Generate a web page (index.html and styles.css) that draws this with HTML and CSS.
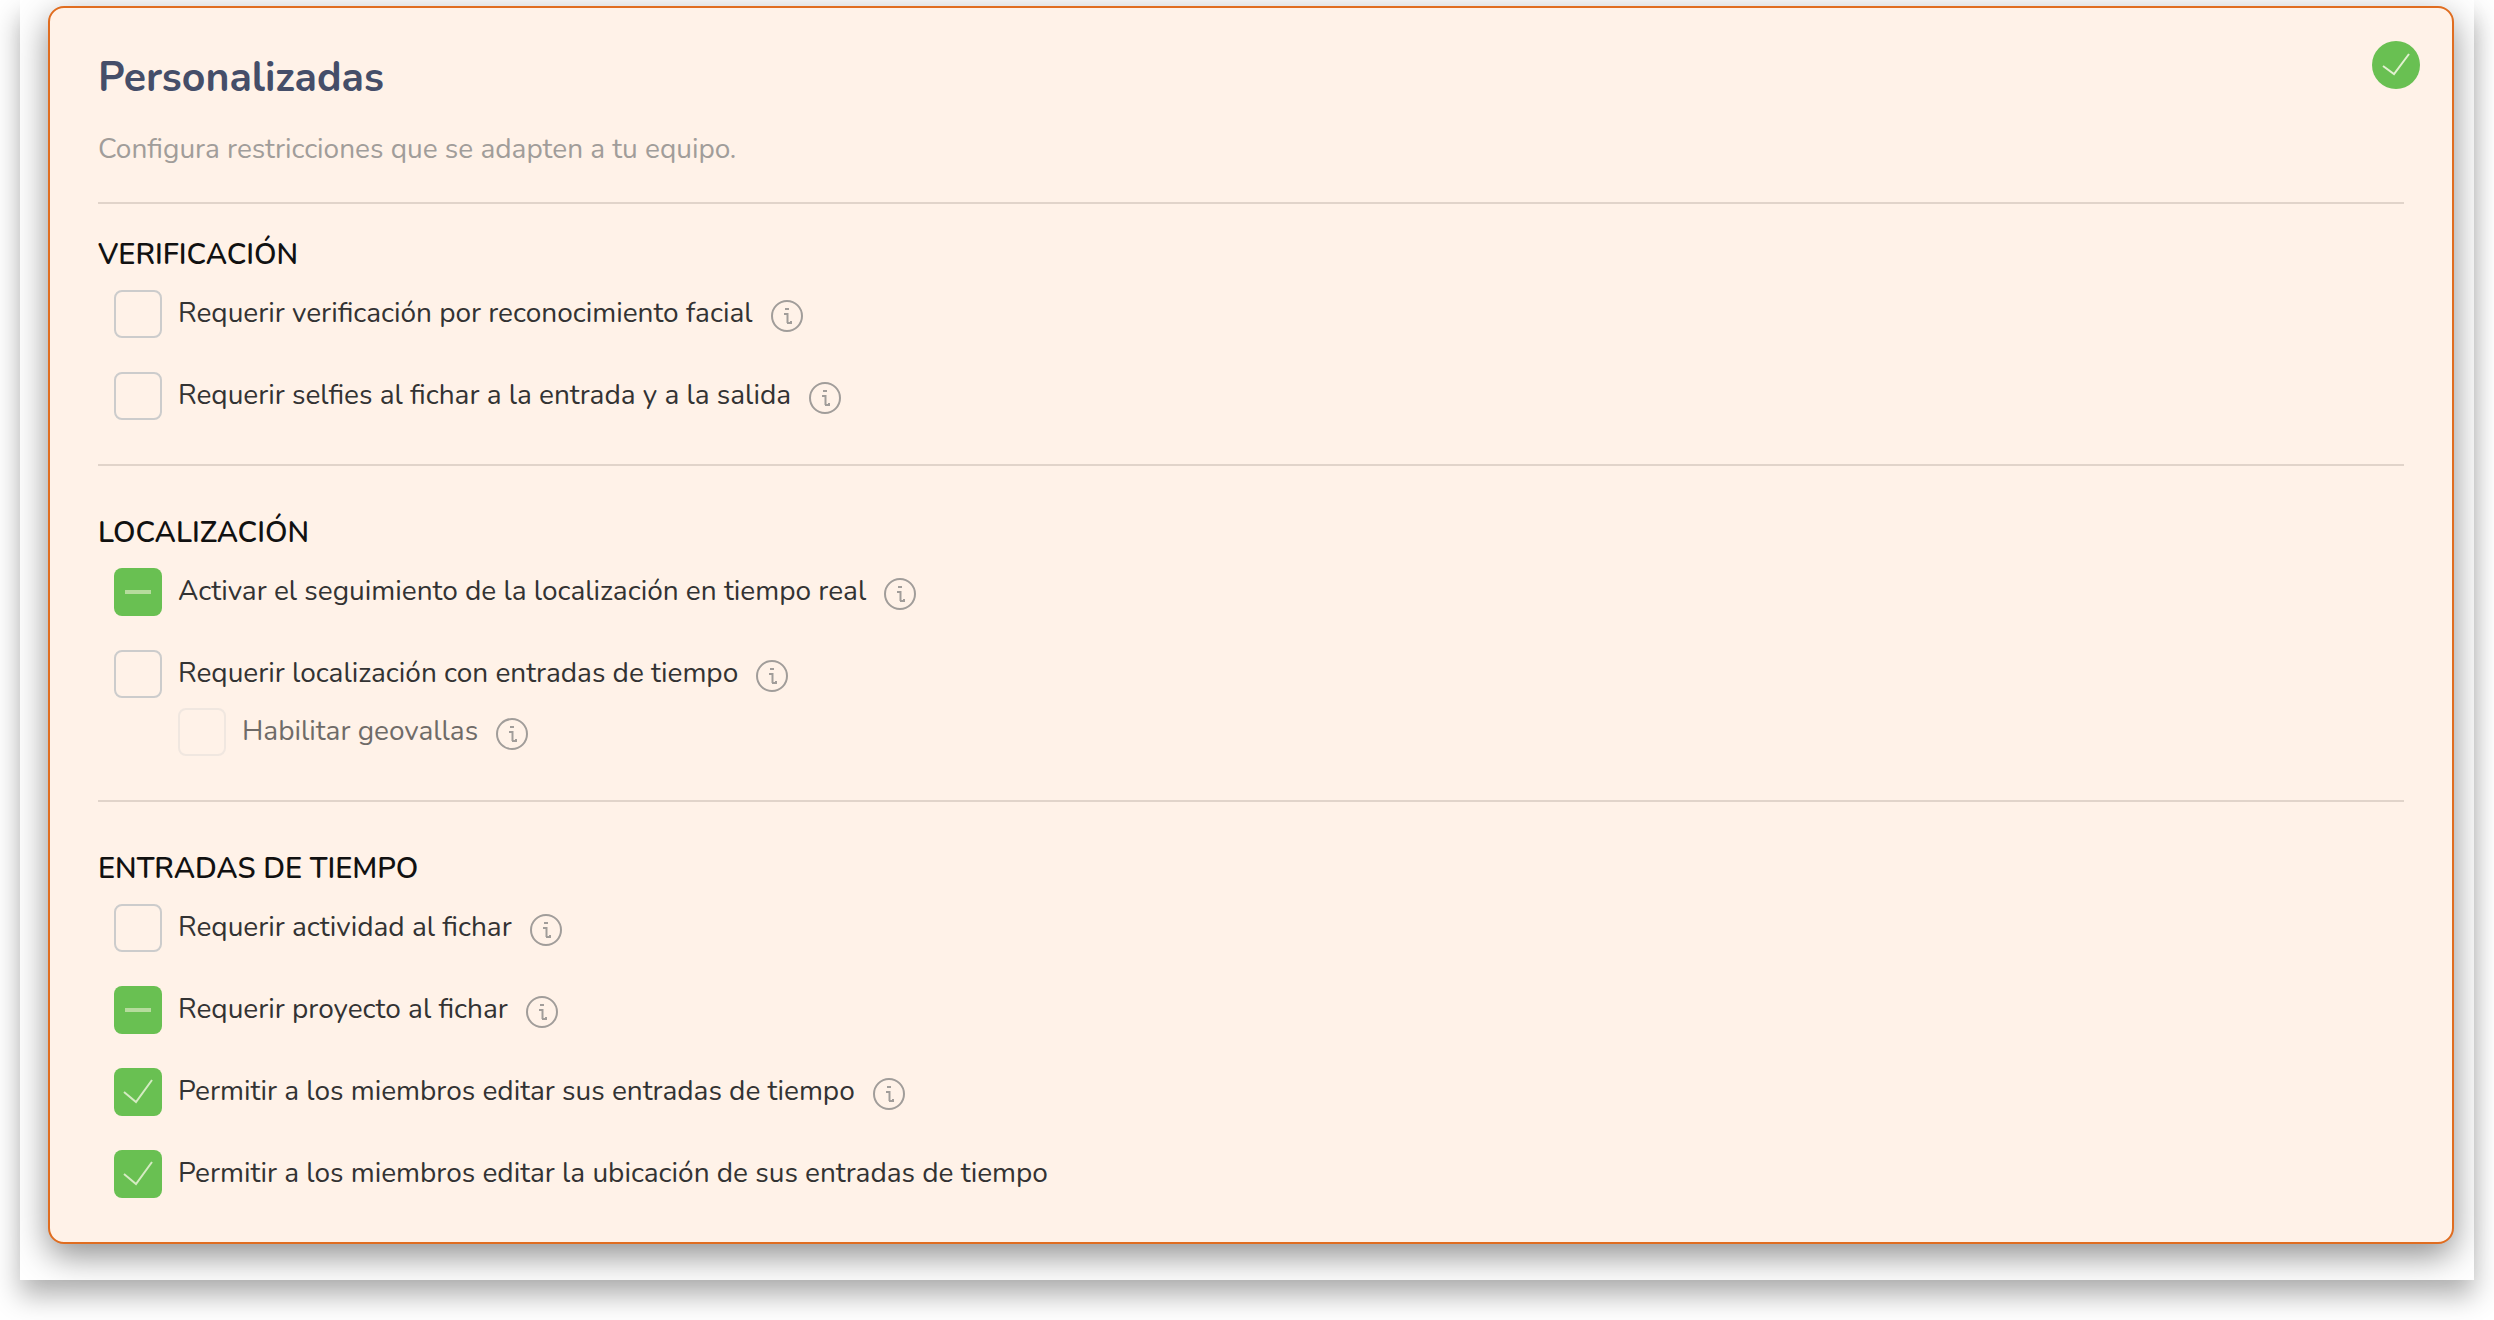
FILE: index.html
```html
<!DOCTYPE html>
<html lang="es">
<head>
    <meta charset="UTF-8">
    <meta name="viewport" content="width=device-width, initial-scale=1.0">
    <title>Restricciones personalizadas</title>
    <link rel="stylesheet" href="styles.css">
</head>
<body>
    <svg class="sprite" aria-hidden="true">
        <symbol id="icon-info" viewBox="0 0 32 32">
            <circle cx="16" cy="16" r="15"/>
            <path d="M14 9h4M13 14h3.5v9M16 23h4v-2"/>
        </symbol>
    </svg>

    <main class="panel">
        <div class="card">
            <svg class="selected-badge" viewBox="0 0 48 48" role="img" aria-label="Seleccionado">
                <circle cx="24" cy="24" r="24"/>
                <path d="M11 25l11 8 15-20"/>
            </svg>

            <header class="card-header">
                <h1 class="card-title">Personalizadas</h1>
                <p class="card-subtitle">Configura restricciones que se adapten a tu equipo.</p>
            </header>

            <section class="section">
                <h2 class="section-title">VERIFICACIÓN</h2>
                <div class="options">
                    <div class="option">
                        <input type="checkbox" class="checkbox" id="facial">
                        <label for="facial">Requerir verificación por reconocimiento facial</label>
                        <button type="button" class="info" aria-label="Información"><svg><use href="#icon-info"/></svg></button>
                    </div>
                    <div class="option">
                        <input type="checkbox" class="checkbox" id="selfies">
                        <label for="selfies">Requerir selfies al fichar a la entrada y a la salida</label>
                        <button type="button" class="info" aria-label="Información"><svg><use href="#icon-info"/></svg></button>
                    </div>
                </div>
            </section>

            <section class="section">
                <h2 class="section-title">LOCALIZACIÓN</h2>
                <div class="options">
                    <div class="option">
                        <input type="checkbox" class="checkbox partial" id="seguimiento" checked>
                        <label for="seguimiento">Activar el seguimiento de la localización en tiempo real</label>
                        <button type="button" class="info" aria-label="Información"><svg><use href="#icon-info"/></svg></button>
                    </div>
                    <div class="option-group">
                        <div class="option">
                            <input type="checkbox" class="checkbox" id="localizacion">
                            <label for="localizacion">Requerir localización con entradas de tiempo</label>
                            <button type="button" class="info" aria-label="Información"><svg><use href="#icon-info"/></svg></button>
                        </div>
                        <div class="option nested">
                            <input type="checkbox" class="checkbox" id="geovallas" disabled>
                            <label for="geovallas">Habilitar geovallas</label>
                            <button type="button" class="info" aria-label="Información"><svg><use href="#icon-info"/></svg></button>
                        </div>
                    </div>
                </div>
            </section>

            <section class="section">
                <h2 class="section-title">ENTRADAS DE TIEMPO</h2>
                <div class="options">
                    <div class="option">
                        <input type="checkbox" class="checkbox" id="actividad">
                        <label for="actividad">Requerir actividad al fichar</label>
                        <button type="button" class="info" aria-label="Información"><svg><use href="#icon-info"/></svg></button>
                    </div>
                    <div class="option">
                        <input type="checkbox" class="checkbox partial" id="proyecto" checked>
                        <label for="proyecto">Requerir proyecto al fichar</label>
                        <button type="button" class="info" aria-label="Información"><svg><use href="#icon-info"/></svg></button>
                    </div>
                    <div class="option">
                        <input type="checkbox" class="checkbox" id="editar" checked>
                        <label for="editar">Permitir a los miembros editar sus entradas de tiempo</label>
                        <button type="button" class="info" aria-label="Información"><svg><use href="#icon-info"/></svg></button>
                    </div>
                    <div class="option">
                        <input type="checkbox" class="checkbox" id="ubicacion" checked>
                        <label for="ubicacion">Permitir a los miembros editar la ubicación de sus entradas de tiempo</label>
                    </div>
                </div>
            </section>
        </div>
    </main>
</body>
</html>
```
FILE: styles.css
```css
* {
    margin: 0;
    padding: 0;
    box-sizing: border-box;
}

body {
    font-family: Nunito, Roboto, sans-serif;
    font-size: 28px;
    line-height: 40px;
    color: #333;
    background: #fff;
    padding: 0 20px 40px;
}

.sprite {
    display: none;
}

.panel {
    background: #fff;
    padding: 6px 20px 36px 28px;
    box-shadow: 0 16px 26px rgba(0, 0, 0, 0.3);
}

.card {
    position: relative;
    background: #fff2e8;
    border: 2px solid #e06d20;
    border-radius: 16px;
    padding: 46px 48px 44px;
    box-shadow: 0 12px 34px rgba(0, 0, 0, 0.44);
}

.selected-badge {
    position: absolute;
    top: 33px;
    right: 32px;
    width: 48px;
    height: 48px;
    fill: #69c052;
}

.selected-badge path {
    fill: none;
    stroke: #e2f0d0;
    stroke-width: 2;
}

.card-header {
    padding-bottom: 33px;
}

.card-title {
    font-size: 41px;
    font-weight: 700;
    line-height: 48px;
    color: #454e69;
    margin-bottom: 27px;
}

.card-subtitle {
    color: #a19d9a;
}

.section {
    border-top: 2px solid #e1d4ca;
    padding: 47px 0 44px;
}

.card-header + .section {
    padding-top: 31px;
}

.section:last-child {
    padding-bottom: 0;
}

.section-title {
    font-size: 29px;
    font-weight: 600;
    line-height: 40px;
    color: #111;
    margin-bottom: 15px;
}

.options {
    display: flex;
    flex-direction: column;
    gap: 34px;
    padding-left: 16px;
}

.option-group {
    display: flex;
    flex-direction: column;
    gap: 10px;
}

.option {
    display: flex;
    align-items: center;
    gap: 16px;
}

.option.nested {
    padding-left: 64px;
}

.option label {
    padding-bottom: 2px;
}

.checkbox {
    appearance: none;
    flex: none;
    width: 48px;
    height: 48px;
    border: 2px solid #ccc;
    border-radius: 8px;
}

.checkbox:checked {
    border: 0;
    background: #69c052 url("data:image/svg+xml,%3Csvg xmlns='http://www.w3.org/2000/svg' viewBox='0 0 48 48'%3E%3Cpath d='M10 24l12 10 16-22' fill='none' stroke='%23d5ebc3' stroke-width='2'/%3E%3C/svg%3E");
}

.checkbox.partial:checked {
    background: linear-gradient(#b6dc9d, #b6dc9d) center / 26px 4px no-repeat #69c052;
}

.checkbox:disabled {
    opacity: 0.3;
}

.checkbox:disabled + label {
    opacity: 0.7;
}

.info {
    width: 32px;
    height: 32px;
    border: 0;
    background: none;
    margin-top: 4px;
    margin-left: 2px;
}

.info svg {
    display: block;
    width: 32px;
    height: 32px;
    fill: none;
    stroke: #a19d9a;
    stroke-width: 2;
}
```
